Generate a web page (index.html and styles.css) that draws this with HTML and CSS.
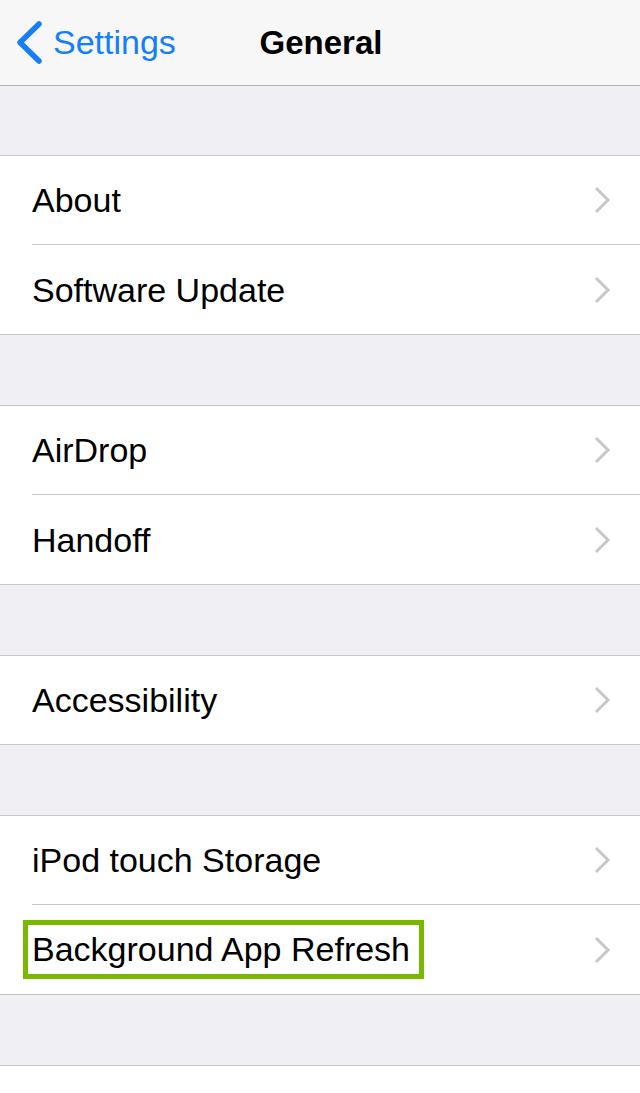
FILE: index.html
```html
<!DOCTYPE html>
<html>
<head>
<meta charset="utf-8">
<link rel="stylesheet" href="styles.css">
</head>
<body>
<div class="nav">
  <div class="back">
    <svg class="back-icon" width="30" height="44" viewBox="0 0 30 44"><path d="M23 3 L4 21.5 L23 40" fill="none" stroke="#147efb" stroke-width="5.5" stroke-linecap="round" stroke-linejoin="round"/></svg>
    <span class="back-label">Settings</span>
  </div>
  <div class="title">General</div>
  <div></div>
</div>

<div class="spacer first"></div>
<div class="group">
  <div class="row"><div class="row-inner"><span class="label">About</span><svg class="chev" width="18" height="28" viewBox="0 0 18 28"><path d="M3 2 L15 14 L3 26" fill="none" stroke="#c7c7cc" stroke-width="3"/></svg></div></div>
  <div class="row"><div class="row-inner"><span class="label">Software Update</span><svg class="chev" width="18" height="28" viewBox="0 0 18 28"><path d="M3 2 L15 14 L3 26" fill="none" stroke="#c7c7cc" stroke-width="3"/></svg></div></div>
</div>

<div class="spacer"></div>
<div class="group">
  <div class="row"><div class="row-inner"><span class="label">AirDrop</span><svg class="chev" width="18" height="28" viewBox="0 0 18 28"><path d="M3 2 L15 14 L3 26" fill="none" stroke="#c7c7cc" stroke-width="3"/></svg></div></div>
  <div class="row"><div class="row-inner"><span class="label">Handoff</span><svg class="chev" width="18" height="28" viewBox="0 0 18 28"><path d="M3 2 L15 14 L3 26" fill="none" stroke="#c7c7cc" stroke-width="3"/></svg></div></div>
</div>

<div class="spacer"></div>
<div class="group">
  <div class="row"><div class="row-inner"><span class="label">Accessibility</span><svg class="chev" width="18" height="28" viewBox="0 0 18 28"><path d="M3 2 L15 14 L3 26" fill="none" stroke="#c7c7cc" stroke-width="3"/></svg></div></div>
</div>

<div class="spacer"></div>
<div class="group">
  <div class="row"><div class="row-inner"><span class="label">iPod touch Storage</span><svg class="chev" width="18" height="28" viewBox="0 0 18 28"><path d="M3 2 L15 14 L3 26" fill="none" stroke="#c7c7cc" stroke-width="3"/></svg></div></div>
  <div class="row"><div class="row-inner"><span class="label highlight">Background App Refresh</span><svg class="chev" width="18" height="28" viewBox="0 0 18 28"><path d="M3 2 L15 14 L3 26" fill="none" stroke="#c7c7cc" stroke-width="3"/></svg></div></div>
</div>

<div class="spacer"></div>
<div class="tail"></div>
</body>
</html>
```

FILE: styles.css
```css
html, body {
  margin: 0;
  padding: 0;
  background: #ffffff;
}
body {
  width: 640px;
  height: 1093px;
  overflow: hidden;
  font-family: "Liberation Sans", Arial, sans-serif;
  color: #000;
}
.nav {
  height: 85px;
  background: #f7f7f8;
  border-bottom: 1px solid #b2b2b2;
  display: grid;
  grid-template-columns: 1fr auto 1fr;
  align-items: center;
}
.back {
  display: flex;
  align-items: center;
  padding-left: 16px;
  color: #147efb;
  font-size: 34px;
}
.back-icon {
  display: block;
  margin-right: 7px;
}
.title {
  font-size: 33px;
  font-weight: bold;
  padding-left: 2px;
}
.spacer {
  height: 70px;
  background: #efeff4;
}
.spacer.first {
  height: 69px;
}
.group {
  background: #fff;
  border-top: 1px solid #c8c7cc;
  border-bottom: 1px solid #c8c7cc;
}
.row {
  padding-left: 32px;
}
.row-inner {
  height: 88px;
  border-bottom: 1px solid #c8c7cc;
  display: flex;
  align-items: center;
  justify-content: space-between;
  padding-right: 29px;
}
.row:last-child .row-inner {
  height: 89px;
  border-bottom: none;
}
.row:only-child .row-inner {
  height: 88px;
}
.label {
  font-size: 34px;
  line-height: 40px;
}
.chev {
  display: block;
}
.highlight {
  display: inline-block;
  border: 5px solid #78b900;
  line-height: 49px;
  padding: 0 9px 0 4px;
  margin-left: -9px;
}
.tail {
  border-top: 1px solid #c8c7cc;
  height: 40px;
}
```
